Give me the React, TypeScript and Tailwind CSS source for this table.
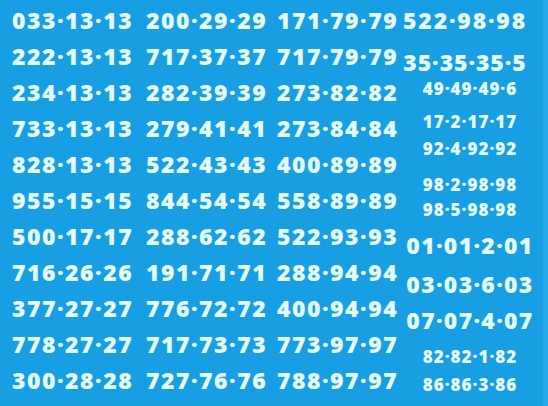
const col1 = [
  "033·13·13", "222·13·13", "234·13·13", "733·13·13", "828·13·13", "955·15·15",
  "500·17·17", "716·26·26", "377·27·27", "778·27·27", "300·28·28",
];
const col2 = [
  "200·29·29", "717·37·37", "282·39·39", "279·41·41", "522·43·43", "844·54·54",
  "288·62·62", "191·71·71", "776·72·72", "717·73·73", "727·76·76",
];
const col3 = [
  "171·79·79", "717·79·79", "273·82·82", "273·84·84", "400·89·89", "558·89·89",
  "522·93·93", "288·94·94", "400·94·94", "773·97·97", "788·97·97",
];

const Column = ({ items, className }: { items: string[]; className: string }) => (
  <div className={`flex flex-col pt-[2px] ${className}`}>
    {items.map((n) => (
      <div key={n} className="h-[36px] leading-[36px] text-[23px] tracking-[1.5px] whitespace-nowrap">
        {n}
      </div>
    ))}
  </div>
);

export default function App() {
  return (
    <div className="w-[548px] h-[406px] flex bg-[#189fe3] text-[#e4fcf6] font-['Open_Sans',sans-serif] font-extrabold overflow-hidden">
      <div className="flex flex-1 pl-[12px]">
        <Column items={col1} className="w-[134px]" />
        <Column items={col2} className="w-[131px]" />
        <Column items={col3} className="w-[124px]" />
        <div className="flex flex-col items-center w-[138px] whitespace-nowrap">
          <div className="mt-[8px] h-[24px] leading-[24px] text-[23px] tracking-[1.8px] mr-[10px]">522·98·98</div>
          <div className="mt-[18px] h-[24px] leading-[24px] text-[23px] tracking-[0.9px] mr-[10px]">35·35·35·5</div>
          <div className="mt-[3px] h-[24px] leading-[24px] text-[17px] tracking-[1px]">49·49·49·6</div>
          <div className="mt-[8.5px] h-[24px] leading-[24px] text-[17px] tracking-[1px]">17·2·17·17</div>
          <div className="mt-[3.5px] h-[24px] leading-[24px] text-[17px] tracking-[1px]">92·4·92·92</div>
          <div className="mt-[12px] h-[24px] leading-[24px] text-[17px] tracking-[1px]">98·2·98·98</div>
          <div className="mt-[1px] h-[24px] leading-[24px] text-[17px] tracking-[1px]">98·5·98·98</div>
          <div className="mt-[10.5px] h-[24px] leading-[24px] text-[23px] tracking-[1.3px]">01·01·2·01</div>
          <div className="mt-[15px] h-[24px] leading-[24px] text-[23px] tracking-[1.3px]">03·03·6·03</div>
          <div className="mt-[12.5px] h-[24px] leading-[24px] text-[23px] tracking-[1.3px]">07·07·4·07</div>
          <div className="mt-[13px] h-[24px] leading-[24px] text-[17px] tracking-[1px]">82·82·1·82</div>
          <div className="mt-[4px] h-[24px] leading-[24px] text-[17px] tracking-[1px]">86·86·3·86</div>
        </div>
      </div>
      <div className="w-[5px] bg-[#24a9ec]" />
    </div>
  );
}
